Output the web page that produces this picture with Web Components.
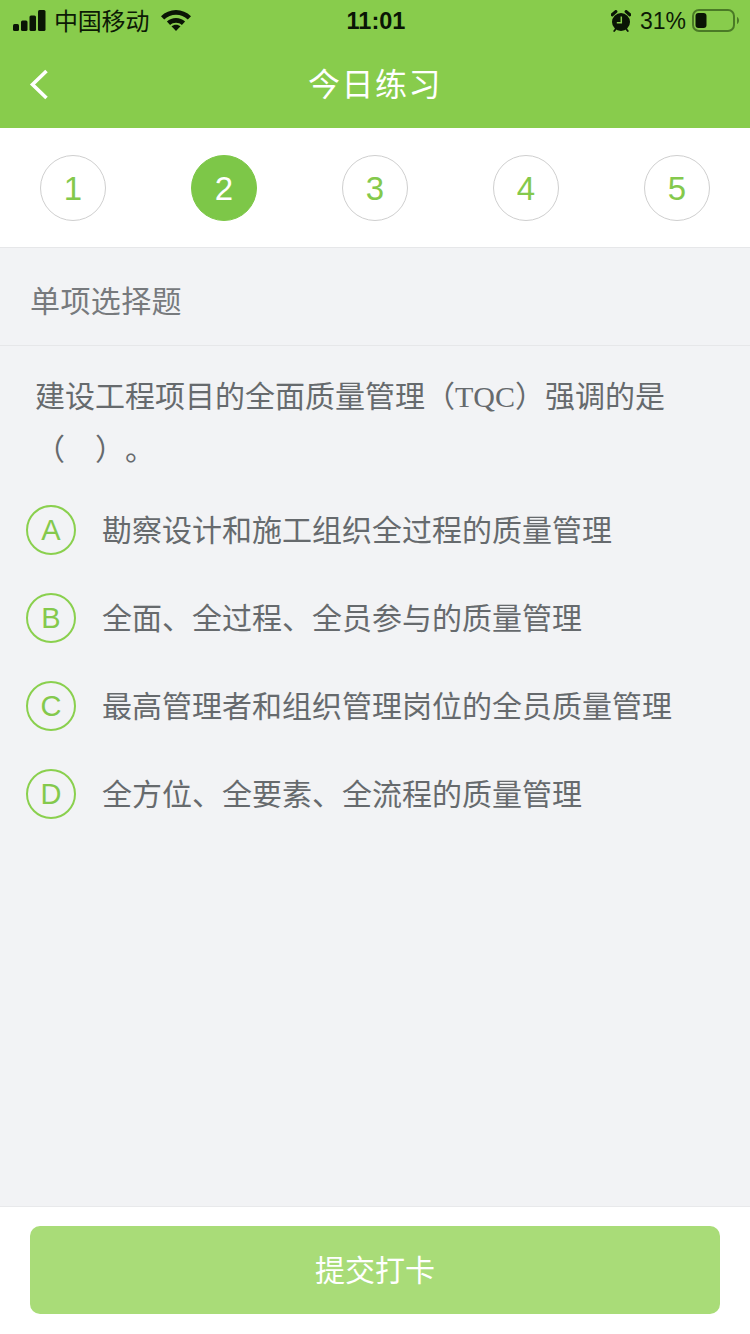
<!DOCTYPE html>
<html lang="zh">
<head>
<meta charset="utf-8">
<title>今日练习</title>
<style>
  html, body { margin: 0; height: 100%; }
  body {
    width: 750px;
    height: 1334px;
    overflow: hidden;
    background: #f2f3f5;
    font-family: "Noto Sans CJK SC", sans-serif;
  }
  practice-page { height: 1334px; }
</style>
</head>
<body>
<practice-page>
  <status-bar slot="head"></status-bar>
  <nav-bar slot="head">今日练习</nav-bar>
  <step-list slot="head" current="2" count="5"></step-list>
  <section-label>单项选择题</section-label>
  <question-block>建设工程项目的全面质量管理（<span style="font-family:'Liberation Serif',serif;line-height:0">TQC</span>）强调的是<br>（　）。</question-block>
  <option-item letter="A">勘察设计和施工组织全过程的质量管理</option-item>
  <option-item letter="B">全面、全过程、全员参与的质量管理</option-item>
  <option-item letter="C">最高管理者和组织管理岗位的全员质量管理</option-item>
  <option-item letter="D">全方位、全要素、全流程的质量管理</option-item>
  <submit-bar slot="foot">提交打卡</submit-bar>
</practice-page>

<script>
function defineShadow(name, html, extra) {
  const template = document.createElement("template");
  template.innerHTML = html;
  class Element extends HTMLElement {
    constructor() {
      super();
      this.attachShadow({ mode: "open" }).appendChild(template.content.cloneNode(true));
    }
    connectedCallback() {
      if (extra) extra.call(this, this.shadowRoot);
    }
  }
  customElements.define(name, Element);
}

const UI_FONT = `"Noto Sans CJK SC", sans-serif`;
const LATIN_FONT = `"Liberation Sans", "Noto Sans CJK SC", sans-serif`;

defineShadow("practice-page", `
  <style>
    :host { display: flex; flex-direction: column; width: 750px; }
    main { flex: 1; min-height: 0; }
  </style>
  <slot name="head"></slot>
  <main><slot></slot></main>
  <slot name="foot"></slot>
`);

defineShadow("status-bar", `
  <style>
    :host {
      display: grid;
      grid-template-columns: 1fr auto 1fr;
      align-items: center;
      height: 40px;
      padding: 0 11px 0 13px;
      background: #88cc4c;
      color: #0c1a05;
      font: 400 24px/40px ${UI_FONT};
    }
    .left, .right { display: flex; align-items: center; }
    .right { justify-content: flex-end; }
    .carrier { margin-left: 8px; padding-bottom: 1px; letter-spacing: -.2px; }
    .wifi { margin-left: 12px; }
    .time { font: 700 23.5px/40px ${LATIN_FONT}; color: #0a1505; }
    .pct { margin-left: 9px; font: 400 23px/40px ${LATIN_FONT}; }
    .batt { margin-left: 6px; }
    svg { display: block; }
  </style>
  <div class="left">
    <svg width="33" height="21" viewBox="0 0 33 21" fill="#0a1505">
      <rect x="0" y="14" width="6" height="7" rx="1.500"/>
      <rect x="8" y="10.500" width="6.500" height="10.500" rx="1.500"/>
      <rect x="16.500" y="5.500" width="6.500" height="15.500" rx="1.500"/>
      <rect x="25" y="0" width="7.500" height="21" rx="1.500"/>
    </svg>
    <span class="carrier">中国移动</span>
    <svg class="wifi" width="30" height="21" viewBox="0 0 30 21" fill="#0a1505">
      <path d="M15 0C9.200 0 4.100 2.300 0 6.200l3.200 3.400C6.500 6.500 10.500 4.700 15 4.700s8.500 1.800 11.800 4.900L30 6.200C25.900 2.300 20.800 0 15 0z"/>
      <path d="M15 8C11.500 8 8.400 9.300 5.900 11.600l3.200 3.400C10.700 13.600 12.700 12.700 15 12.700s4.300.9 5.900 2.300l3.200-3.400C21.600 9.300 18.500 8 15 8z"/>
      <path d="M15 21l-4.500-4.700c1.200-1 2.800-1.600 4.500-1.600s3.300.6 4.500 1.600z"/>
    </svg>
  </div>
  <div class="time">11:01</div>
  <div class="right">
    <svg width="20" height="22" viewBox="0 0 20 22">
      <circle cx="10" cy="12" r="9" fill="#0a1505"/>
      <path d="M1.200 4.800 4.800 1.600M18.800 4.800 15.200 1.600" stroke="#0a1505" stroke-width="3.200" stroke-linecap="round"/>
      <path d="M3.200 21 4.800 19M16.800 21 15.200 19" stroke="#0a1505" stroke-width="1.800" stroke-linecap="round"/>
      <path d="M10.300 6.500V12.800H5.800" fill="none" stroke="#88cc4c" stroke-width="1.500"/>
    </svg>
    <span class="pct">31%</span>
    <svg class="batt" width="47" height="23" viewBox="0 0 47 23">
      <rect x="1" y="1" width="41" height="21" rx="6" fill="none" stroke="#4a7a26" stroke-width="2"/>
      <rect x="3.500" y="4" width="11" height="15" rx="3" fill="#0a1505"/>
      <path d="M45 8c1.400.6 2 2 2 3.500s-.6 2.900-2 3.500z" fill="#4a7a26"/>
    </svg>
  </div>
`);

defineShadow("nav-bar", `
  <style>
    :host {
      display: grid;
      grid-template-columns: 88px 1fr 88px;
      align-items: center;
      height: 88px;
      background: #88cc4c;
      color: #fff;
    }
    .back { display: flex; padding-left: 29px; }
    .title { text-align: center; font: 400 32px/1 ${UI_FONT}; padding-bottom: 4px; letter-spacing: 1.500px; }
    svg { display: block; }
  </style>
  <div class="back">
    <svg width="20" height="31" viewBox="0 0 20 31" fill="none" stroke="#fff" stroke-width="3.600">
      <path d="M17.500 2 3.500 15.500l14 13.500"/>
    </svg>
  </div>
  <div class="title"><slot></slot></div>
  <div></div>
`);

defineShadow("step-circle", `
  <style>
    :host {
      display: flex;
      align-items: center;
      justify-content: center;
      box-sizing: border-box;
      width: 66px;
      height: 66px;
      border-radius: 50%;
      border: 1px solid #cfcfcf;
      color: #84c94c;
      font: 400 33px/1 ${LATIN_FONT};
    }
    :host([active]) { background: #7dc748; border-color: #7dc748; color: #fff; }
  </style>
  <slot></slot>
`);

defineShadow("step-list", `
  <style>
    :host {
      display: flex;
      justify-content: space-between;
      align-items: center;
      box-sizing: border-box;
      height: 120px;
      padding: 1px 40px 0;
      background: #fff;
      border-bottom: 1px solid #e6e7e9;
    }
  </style>
  <slot></slot>
`, function () {
  const count = Number(this.getAttribute("count"));
  const current = Number(this.getAttribute("current"));
  for (let i = 1; i <= count; i++) {
    const circle = document.createElement("step-circle");
    circle.textContent = i;
    if (i === current) circle.setAttribute("active", "");
    this.appendChild(circle);
  }
});

defineShadow("section-label", `
  <style>
    :host {
      display: flex;
      align-items: center;
      box-sizing: border-box;
      height: 98px;
      padding: 5px 0 0 30px;
      border-bottom: 1px solid #e6e7e9;
      color: #777a7d;
      font: 400 30px/1 ${UI_FONT};
      letter-spacing: .4px;
    }
  </style>
  <slot></slot>
`);

defineShadow("question-block", `
  <style>
    :host {
      display: block;
      padding: 22px 70px 12px 35px;
      color: #666a6d;
      font: 400 30px/53px ${UI_FONT};
      text-spacing-trim: space-all;
    }
  </style>
  <slot></slot>
`);

defineShadow("option-item", `
  <style>
    :host {
      display: flex;
      align-items: center;
      gap: 26px;
      height: 88px;
      padding-left: 26px;
      color: #666a6d;
      font: 400 30px/1 ${UI_FONT};
    }
    .letter {
      display: flex;
      align-items: center;
      justify-content: center;
      box-sizing: border-box;
      flex: none;
      width: 50px;
      height: 50px;
      border: 2px solid #8ad04e;
      border-radius: 50%;
      color: #84c94c;
      font: 400 29px/1 ${LATIN_FONT};
    }
    .text { padding-bottom: 4px; }
  </style>
  <span class="letter"></span>
  <span class="text"><slot></slot></span>
`, function (root) {
  root.querySelector(".letter").textContent = this.getAttribute("letter");
});

defineShadow("submit-bar", `
  <style>
    :host {
      display: block;
      box-sizing: border-box;
      height: 128px;
      padding: 19px 30px 20px;
      background: #fff;
      border-top: 1px solid #e8e9eb;
    }
    .btn {
      display: flex;
      align-items: center;
      justify-content: center;
      height: 88px;
      padding-bottom: 4px;
      box-sizing: border-box;
      border-radius: 10px;
      background: #a9dc78;
      color: #fff;
      font: 400 30px/1 ${UI_FONT};
    }
  </style>
  <div class="btn"><slot></slot></div>
`);
</script>
</body>
</html>
